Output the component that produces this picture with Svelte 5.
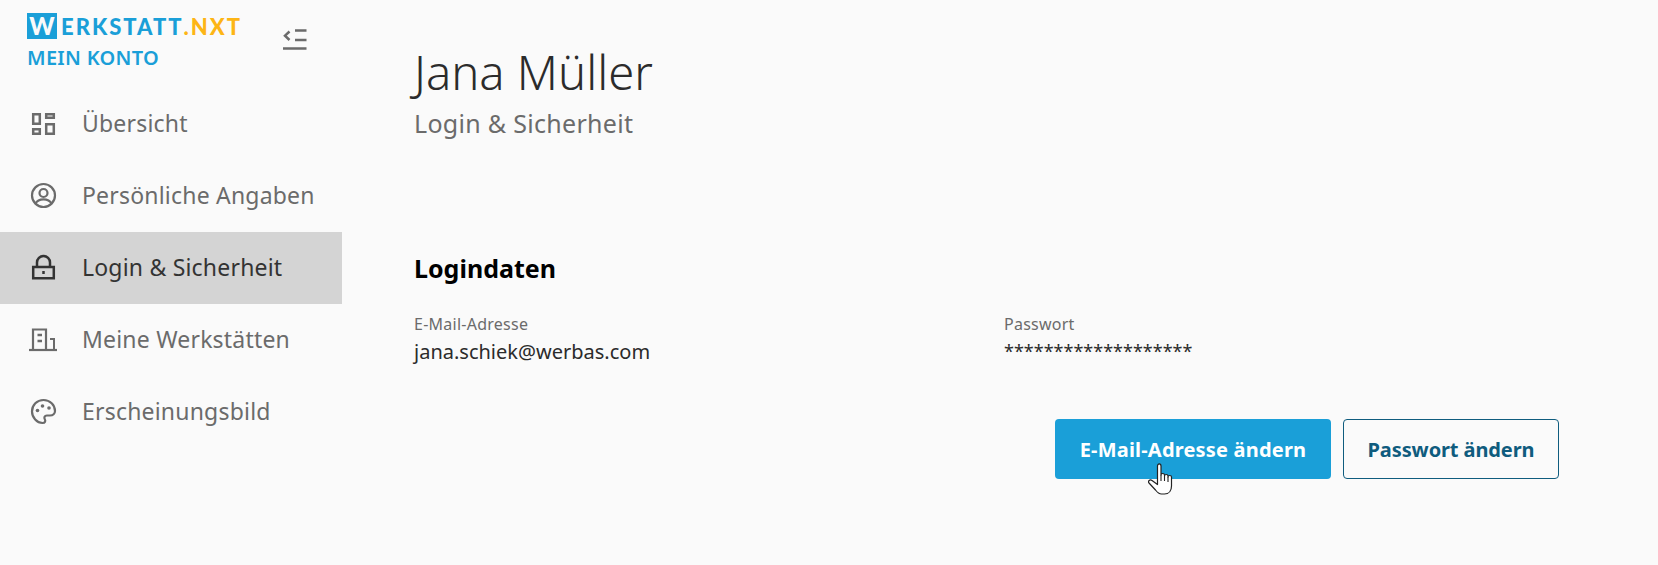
<script>
  const nav = [
    { label: 'Übersicht', icon: 'dash' },
    { label: 'Persönliche Angaben', icon: 'user' },
    { label: 'Login & Sicherheit', icon: 'lock', active: true },
    { label: 'Meine Werkstätten', icon: 'house' },
    { label: 'Erscheinungsbild', icon: 'palette' }
  ];
</script>

<div class="page">
  <aside class="sidebar">
    <div class="brand">
      <div class="brand-text">
        <div class="logo"><span class="logo-w">W</span><span class="logo-rest">ERKSTATT</span><span class="logo-nxt">.NXT</span></div>
        <div class="konto">MEIN KONTO</div>
      </div>
      <button class="collapse" aria-label="Menü einklappen">
        <svg width="24" height="22" viewBox="0 0 24 22" fill="none" stroke="#6b6b6b" stroke-width="2.500">
          <path d="M6.500 2.500 2 6.700l4.500 4.300" />
          <path d="M12 1.500h11.500M12 11h11.500M0 19.500h23.500" />
        </svg>
      </button>
    </div>

    <nav>
      {#each nav as item}
        <a href="#top" class="item" class:active={item.active}>
          <span class="icon">
            <svg width="28" height="28" viewBox="0 0 28 28" fill="none" stroke="currentColor" stroke-width="2">
              {#if item.icon === 'dash'}
                <path d="M4.200 4.200h6.600v9.600H4.200zM17.200 4.200h7.600v3.600h-7.600zM17.200 14.200h7.600v9.600h-7.600zM4.200 19.200h6.600v4.600H4.200z" stroke-width="2.500" />
              {:else if item.icon === 'user'}
                <circle cx="14.500" cy="13.500" r="11.500" stroke-width="2.200" />
                <circle cx="14.500" cy="11" r="4" stroke-width="2.200" />
                <path d="M6.500 21.500c1.500-3 4.500-4.200 8-4.200s6.500 1.200 8 4.200" stroke-width="2.200" />
              {:else if item.icon === 'lock'}
                <path d="M4.200 13h20.600v11.300H4.200z" stroke-width="2.500" />
                <path d="M8 13V8.500a6.500 6.500 0 0 1 13 0V13" stroke-width="2.500" />
                <path d="M14.500 17v3" stroke-width="2.500" />
              {:else if item.icon === 'house'}
                <path d="M0 24h28" stroke-width="2.200" />
                <path d="M4 24V3.500h13V24" stroke-width="2.200" />
                <path d="M21 13h4v11" stroke-width="2" />
                <path d="M8.500 9h4.500M8.500 15h4.500" stroke-width="2.400" />
              {:else}
                <path d="M14.500 2C8 2 3 7 3 13.500 3 19.500 8 25 13.500 25c2.800 0 3.200-2.200 2.300-3.700-1-1.700-.2-3.800 2-3.800h3.200c3 0 5-2 5-4.500C26 7 21 2 14.500 2z" stroke-width="2.200" />
                <circle cx="8.500" cy="12.500" r="1.800" fill="currentColor" stroke="none" />
                <circle cx="13.500" cy="8" r="1.800" fill="currentColor" stroke="none" />
                <circle cx="20" cy="10" r="1.800" fill="currentColor" stroke="none" />
              {/if}
            </svg>
          </span>
          <span class="item-label">{item.label}</span>
        </a>
      {/each}
    </nav>
  </aside>

  <main class="content">
    <h1>Jana Müller</h1>
    <p class="subtitle">Login &amp; Sicherheit</p>

    <h2>Logindaten</h2>
    <div class="fields">
      <div class="field">
        <div class="label">E-Mail-Adresse</div>
        <div class="value">jana.schiek@werbas.com</div>
      </div>
      <div class="field">
        <div class="label">Passwort</div>
        <div class="value secret">*******************</div>
      </div>
    </div>

    <div class="actions">
      <button class="btn primary">
        E-Mail-Adresse ändern
        <svg class="cursor" width="26" height="33" viewBox="0 0 26 33">
          <path d="M9.500 3c0-2.800 3.500-2.800 3.500 0v9c0-2 3.500-2 3.500 0v1c0-2 3.500-2 3.500 0v1c0-2 3.500-2 3.500 0v9c0 4-2 8-7 8h-3c-3 0-4.500-2-6-4L1 20c-1.500-2 1-4 3-2.500l5.500 4z" fill="#fff" stroke="#222" stroke-width="1.200" stroke-linejoin="round" />
          <path d="M13 12v6M16.500 13v5M20 14v5" stroke="#222" stroke-width="1.100" fill="none" />
        </svg>
      </button>
      <button class="btn secondary">Passwort ändern</button>
    </div>
  </main>
</div>

<style>
  :global(body) {
    margin: 0;
    background: #fafafa;
    font-family: "Noto Sans", "Open Sans", sans-serif;
  }

  .page {
    display: flex;
    height: 565px;
    overflow: hidden;
  }

  /* sidebar */
  .sidebar {
    width: 342px;
    flex: none;
  }

  .brand {
    display: flex;
    align-items: flex-start;
    justify-content: space-between;
    height: 88px;
    padding: 13px 35px 0 27px;
    box-sizing: border-box;
  }

  .logo {
    display: flex;
    align-items: center;
    height: 26px;
    font-family: "Lato", sans-serif;
    font-weight: 900;
    font-size: 22px;
    letter-spacing: 2px;
  }

  .logo-w {
    width: 30px;
    height: 26px;
    margin-right: 4px;
    background: #1a9fd8;
    color: #fafafa;
    text-align: center;
    line-height: 26px;
    font-size: 24px;
    letter-spacing: 0;
  }

  .logo-rest {
    color: #1a9fd8;
  }

  .logo-nxt {
    color: #fdb515;
  }

  .konto {
    margin-top: 6px;
    color: #1a9fd8;
    font-size: 20px;
    font-weight: 600;
    letter-spacing: 0.300px;
    line-height: 26px;
  }

  .collapse {
    margin-top: 16px;
    padding: 0;
    border: 0;
    background: none;
    height: 22px;
  }

  .item {
    display: flex;
    align-items: center;
    height: 72px;
    padding-left: 29px;
    color: #6b6b6b;
    font-size: 23px;
    letter-spacing: 0.200px;
    text-decoration: none;
  }

  .item.active {
    background: #d4d4d4;
    color: #333;
  }

  .icon {
    display: flex;
    width: 53px;
    flex: none;
  }

  .item-label {
    padding-bottom: 2px;
  }

  /* main column */
  .content {
    flex: 1;
    padding: 41px 99px 0 72px;
    min-width: 0;
  }

  h1 {
    margin: 0;
    color: #2b2b2b;
    font-size: 47.200px;
    font-weight: 300;
    line-height: 62px;
  }

  .subtitle {
    margin: 3px 0 0;
    color: #6b6b6b;
    font-size: 25px;
    letter-spacing: 0.300px;
    line-height: 34px;
  }

  h2 {
    margin: 111px 0 0;
    color: #000;
    font-size: 25px;
    font-weight: 700;
    line-height: 34px;
  }

  .fields {
    display: grid;
    grid-template-columns: 590px 1fr;
    margin-top: 28px;
  }

  .label {
    color: #6b6b6b;
    font-size: 16px;
    letter-spacing: 0.250px;
    line-height: 22px;
  }

  .value {
    color: #2b2b2b;
    font-size: 20px;
    line-height: 28px;
    margin-top: 3px;
  }

  .secret {
    font-size: 18px;
    margin-top: 2px;
  }

  .actions {
    display: flex;
    justify-content: flex-end;
    gap: 12px;
    margin-top: 53px;
  }

  .btn {
    position: relative;
    height: 60px;
    padding: 0;
    border-radius: 4px;
    font: 700 20px "Noto Sans", sans-serif;
  }

  .primary {
    width: 276px;
    border: 0;
    background: #1a9fd8;
    color: #fff;
    letter-spacing: 0.200px;
  }

  .secondary {
    width: 216px;
    border: 1px solid #0f5c7e;
    background: #fafafa;
    color: #0f5c7e;
    letter-spacing: -0.100px;
  }

  .cursor {
    position: absolute;
    left: 93px;
    top: 44px;
  }
</style>
